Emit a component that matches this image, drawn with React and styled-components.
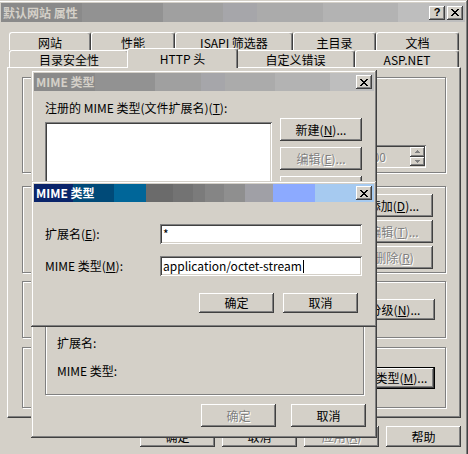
import React from 'react';
import styled, { createGlobalStyle } from 'styled-components';

const FACE = '#d4d0c8';
const SHADOW = '#808080';
const DARK = '#404040';

const GlobalStyle = createGlobalStyle`
  html, body {
    margin: 0;
    padding: 0;
  }
  body {
    background: ${FACE};
    font-family: "Noto Sans CJK SC", "Liberation Sans", sans-serif;
    font-size: 12px;
    line-height: 14px;
    color: #000;
  }
  * {
    box-sizing: border-box;
  }
`;

// hard colour bands of the old 256-colour title gradients
const bands = (list) => {
  let start = 0;
  const stops = list.map(([color, end]) => {
    const stop = `${color} ${start}px ${end}px`;
    start = end;
    return stop;
  });
  return `linear-gradient(to right, ${stops.join(', ')})`;
};

const MAIN_TITLE = bands([
  ['#8a8a8a', 81], ['#929292', 162], ['#a0a0a0', 222], ['#a6a6aa', 256],
  ['#ababab', 322], ['#b3b3b3', 397], ['#bebebe', 480],
]);
const INACTIVE_TITLE = bands([
  ['#8a8a8a', 61], ['#929292', 121], ['#a0a0a0', 167], ['#a6a6aa', 191],
  ['#ababab', 241], ['#b3b3b3', 296], ['#bebebe', 400],
]);
const ACTIVE_TITLE = bands([
  ['#0a246a', 39], ['#004a78', 80], ['#006699', 112], ['#6b6b6b', 139],
  ['#737373', 159], ['#7b7b7b', 171], ['#858585', 190], ['#8f8f8f', 211],
  ['#a0a0a6', 239], ['#8caaff', 281], ['#a6caf0', 400],
]);

const Desktop = styled.div`
  position: relative;
  width: 468px;
  height: 454px;
  overflow: hidden;
  background: ${FACE};
`;

const Window = styled.div`
  position: absolute;
  left: ${p => p.$x}px;
  top: ${p => p.$y}px;
  width: ${p => p.$w}px;
  height: ${p => p.$h}px;
  padding: 3px;
  background: ${FACE};
  display: flex;
  flex-direction: column;
  box-shadow: inset -1px -1px ${DARK}, inset 1px 1px ${FACE},
    inset -2px -2px ${SHADOW}, inset 2px 2px #fff;
`;

const TitleBar = styled.div`
  flex: none;
  height: ${p => p.$h}px;
  display: flex;
  align-items: center;
  padding: 0 2px 0 2px;
  background: ${p => p.$bg};
  color: ${p => (p.$active ? '#fff' : '#d4d0c8')};
  font-weight: bold;
`;

const TitleText = styled.span`
  flex: 1;
  white-space: nowrap;
`;

const TitleButton = styled.div`
  flex: none;
  width: 16px;
  height: 14px;
  margin-left: ${p => p.$gap || 0}px;
  display: flex;
  align-items: center;
  justify-content: center;
  background: ${FACE};
  color: #000;
  font: bold 11px/1 "Liberation Sans", sans-serif;
  box-shadow: inset -1px -1px ${DARK}, inset 1px 1px #fff, inset -2px -2px ${SHADOW};
`;

const X_ROWS = ['11000011', '01100110', '00111100', '00011000', '00111100', '01100110', '11000011'];

const CloseGlyph = () => (
  <svg width="8" height="7" viewBox="0 0 8 7" shapeRendering="crispEdges">
    {X_ROWS.flatMap((row, y) =>
      [...row].map((c, x) =>
        c === '1' ? <rect key={`${x}-${y}`} x={x} y={y} width="1" height="1" fill="#000" /> : null
      )
    )}
  </svg>
);

const Arrow = ({ up }) => (
  <svg width="5" height="3" viewBox="0 0 5 3" shapeRendering="crispEdges">
    <path d={up ? 'M2 0h1v1h1v1h1v1H0V2h1V1h1z' : 'M0 0h5v1H4v1H3v1H2V2H1V1H0z'} fill={SHADOW} />
  </svg>
);

const MainBody = styled.div`
  flex: 1;
  display: flex;
  flex-direction: column;
  padding: 10px 4px 0 6px;
`;

const TabRow = styled.div`
  flex: none;
  display: flex;
  height: ${p => p.$h}px;
  margin: 0 2px;
`;

const Tab = styled.div`
  flex: none;
  position: relative;
  z-index: ${p => (p.$active ? 2 : 1)};
  width: ${p => p.$w + (p.$active ? 4 : 0)}px;
  height: ${p => (p.$active ? 'calc(100% + 3px)' : '100%')};
  margin: ${p => (p.$active ? '-2px -2px -1px' : '0')};
  padding-top: ${p => (p.$active ? 0 : 2)}px;
  display: flex;
  align-items: center;
  justify-content: center;
  white-space: nowrap;
  background: ${FACE};
  border-top: 1px solid #fff;
  border-left: 1px solid #fff;
  border-right: 1px solid ${DARK};
  border-radius: 3px 3px 0 0;
  box-shadow: inset -1px 0 ${SHADOW};
`;

const Panel = styled.div`
  flex: none;
  height: 351px;
  display: flex;
  flex-direction: column;
  padding: 9px 14px 0;
  border-top: 1px solid #fff;
  border-left: 1px solid #fff;
  border-right: 1px solid ${DARK};
  border-bottom: 1px solid ${DARK};
  box-shadow: inset -1px -1px ${SHADOW};
`;

const Group = styled.div`
  flex: none;
  height: ${p => p.$h}px;
  margin-top: ${p => p.$mt || 0}px;
  display: flex;
  flex-direction: column;
  align-items: flex-end;
  justify-content: ${p => p.$justify || 'flex-start'};
  gap: 3px;
  padding: ${p => p.$pad || '0'};
  border: 1px solid ${SHADOW};
  box-shadow: 1px 1px 0 #fff, inset 1px 1px 0 #fff;
`;

const SpinField = styled.div`
  width: 63px;
  height: 23px;
  display: flex;
  align-items: center;
  justify-content: space-between;
  padding: 2px 1px 2px 3px;
  color: ${SHADOW};
  text-shadow: 1px 1px 0 #fff;
  background: ${FACE};
  box-shadow: inset 1px 1px ${SHADOW}, inset -1px -1px #fff, inset 2px 2px ${DARK}, inset -2px -2px ${FACE};
`;

const SpinButtons = styled.div`
  display: flex;
  flex-direction: column;
  width: 15px;
  height: 19px;
`;

const SpinButton = styled.div`
  flex: 1;
  display: flex;
  align-items: center;
  justify-content: center;
  background: ${FACE};
  box-shadow: inset -1px -1px ${DARK}, inset 1px 1px #fff, inset -2px -2px ${SHADOW};
`;

const Button = styled.button`
  flex: none;
  width: ${p => p.$w}px;
  height: ${p => p.$h}px;
  padding: 0;
  border: 0;
  display: flex;
  align-items: center;
  justify-content: center;
  white-space: nowrap;
  font: inherit;
  background: ${FACE};
  color: #000;
  box-shadow: ${p =>
    p.$default
      ? `inset 0 0 0 1px #000, inset -2px -2px ${DARK}, inset 2px 2px #fff, inset -3px -3px ${SHADOW}`
      : `inset -1px -1px ${DARK}, inset 1px 1px #fff, inset -2px -2px ${SHADOW}`};

  &:disabled {
    color: ${SHADOW};
    text-shadow: 1px 1px 0 #fff;
  }
`;

const ButtonBar = styled.div`
  flex: none;
  display: flex;
  justify-content: flex-end;
  gap: ${p => p.$gap}px;
  margin-top: ${p => p.$mt}px;
  margin-right: ${p => p.$mr || 0}px;
`;

const DialogBody = styled.div`
  flex: 1;
  display: flex;
  flex-direction: column;
  padding: ${p => p.$pad};
`;

const ListRow = styled.div`
  display: flex;
  align-items: flex-start;
  margin-top: 3px;
`;

const ListBox = styled.div`
  flex: none;
  width: 227px;
  height: 178px;
  margin-top: 4px;
  background: #fff;
  box-shadow: inset 1px 1px ${SHADOW}, inset -1px -1px #fff, inset 2px 2px ${DARK}, inset -2px -2px ${FACE};
`;

const ButtonColumn = styled.div`
  display: flex;
  flex-direction: column;
  gap: 6px;
  margin-left: 8px;
`;

const InfoGroup = styled.div`
  flex: none;
  width: 319px;
  height: 83px;
  margin-top: 12px;
  display: flex;
  flex-direction: column;
  gap: 14px;
  padding: 23px 0 0 11px;
  border: 1px solid ${SHADOW};
  box-shadow: 1px 1px 0 #fff, inset 1px 1px 0 #fff;
`;

const FieldRow = styled.div`
  display: flex;
  align-items: center;
  height: 20px;
  & + & {
    margin-top: 12px;
  }
`;

const FieldLabel = styled.span`
  flex: none;
  width: 115px;
  white-space: nowrap;
`;

const TextField = styled.div`
  flex: none;
  width: 202px;
  height: 20px;
  display: flex;
  align-items: center;
  padding: 0 3px;
  background: #fff;
  white-space: nowrap;
  box-shadow: inset 1px 1px ${SHADOW}, inset -1px -1px #fff, inset 2px 2px ${DARK}, inset -2px -2px ${FACE};
`;

const Caret = styled.span`
  display: inline-block;
  width: 1px;
  height: 13px;
  margin-left: 1px;
  background: #000;
`;

const Key = ({ children }) => <u>{children}</u>;

const MainWindow = () => (
  <Window $x={-2} $y={0} $w={470} $h={460}>
    <TitleBar $h={19} $bg={MAIN_TITLE}>
      <TitleText>默认网站 属性</TitleText>
      <TitleButton>?</TitleButton>
      <TitleButton $gap={2}><CloseGlyph /></TitleButton>
    </TitleBar>
    <MainBody>
      <TabRow $h={18}>
        <Tab $w={82}>网站</Tab>
        <Tab $w={84}>性能</Tab>
        <Tab $w={118}>ISAPI 筛选器</Tab>
        <Tab $w={83}>主目录</Tab>
        <Tab $w={83}>文档</Tab>
      </TabRow>
      <TabRow $h={17}>
        <Tab $w={120}>目录安全性</Tab>
        <Tab $w={107} $active>HTTP 头</Tab>
        <Tab $w={119}>自定义错误</Tab>
        <Tab $w={104}>ASP.NET</Tab>
      </TabRow>
      <Panel>
        <Group $h={96} $justify="flex-end" $pad="0 19px 4px 0">
          <SpinField>
            <span>100</span>
            <SpinButtons>
              <SpinButton><Arrow up /></SpinButton>
              <SpinButton><Arrow /></SpinButton>
            </SpinButtons>
          </SpinField>
        </Group>
        <Group $h={87} $mt={13} $pad="7px 12px 0 0">
          <Button $w={78} $h={23}>添加(<Key>D</Key>)...</Button>
          <Button $w={78} $h={23} disabled>编辑(<Key>T</Key>)...</Button>
          <Button $w={78} $h={23} disabled>删除(<Key>R</Key>)</Button>
        </Group>
        <Group $h={57} $mt={8} $justify="center" $pad="0 10px 0 0">
          <Button $w={104} $h={21}>编辑分级(<Key>N</Key>)...</Button>
        </Group>
        <Group $h={61} $mt={9} $justify="center" $pad="0 10px 0 0">
          <Button $w={100} $h={22} $default>MIME 类型(<Key>M</Key>)...</Button>
        </Group>
      </Panel>
      <ButtonBar $gap={7} $mt={8}>
        <Button $w={75} $h={21}>确定</Button>
        <Button $w={75} $h={21}>取消</Button>
        <Button $w={75} $h={21} disabled>应用(<Key>A</Key>)</Button>
        <Button $w={75} $h={21}>帮助</Button>
      </ButtonBar>
    </MainBody>
  </Window>
);

const TypesDialog = () => (
  <Window $x={31} $y={70} $w={346} $h={368}>
    <TitleBar $h={18} $bg={INACTIVE_TITLE}>
      <TitleText>MIME 类型</TitleText>
      <TitleButton><CloseGlyph /></TitleButton>
    </TitleBar>
    <DialogBody $pad="10px 8px 0 11px">
      <span>注册的 MIME 类型(文件扩展名)(<Key>T</Key>):</span>
      <ListRow>
        <ListBox />
        <ButtonColumn>
          <Button $w={82} $h={23}>新建(<Key>N</Key>)...</Button>
          <Button $w={82} $h={23} disabled>编辑(<Key>E</Key>)...</Button>
          <Button $w={82} $h={23} disabled>删除(<Key>R</Key>)</Button>
        </ButtonColumn>
      </ListRow>
      <InfoGroup>
        <span>扩展名:</span>
        <span>MIME 类型:</span>
      </InfoGroup>
      <ButtonBar $gap={15} $mt={9}>
        <Button $w={75} $h={23} disabled>确定</Button>
        <Button $w={75} $h={23}>取消</Button>
      </ButtonBar>
    </DialogBody>
  </Window>
);

const EditTypeDialog = () => (
  <Window $x={31} $y={181} $w={346} $h={146}>
    <TitleBar $h={18} $bg={ACTIVE_TITLE} $active>
      <TitleText>MIME 类型</TitleText>
      <TitleButton><CloseGlyph /></TitleButton>
    </TitleBar>
    <DialogBody $pad="22px 12px 0 11px">
      <FieldRow>
        <FieldLabel>扩展名(<Key>E</Key>):</FieldLabel>
        <TextField>*</TextField>
      </FieldRow>
      <FieldRow>
        <FieldLabel>MIME 类型(<Key>M</Key>):</FieldLabel>
        <TextField>application/octet-stream<Caret /></TextField>
      </FieldRow>
      <ButtonBar $gap={9} $mt={17} $mr={4}>
        <Button $w={75} $h={20}>确定</Button>
        <Button $w={75} $h={20}>取消</Button>
      </ButtonBar>
    </DialogBody>
  </Window>
);

export default function App() {
  return (
    <>
      <GlobalStyle />
      <Desktop>
        <MainWindow />
        <TypesDialog />
        <EditTypeDialog />
      </Desktop>
    </>
  );
}
